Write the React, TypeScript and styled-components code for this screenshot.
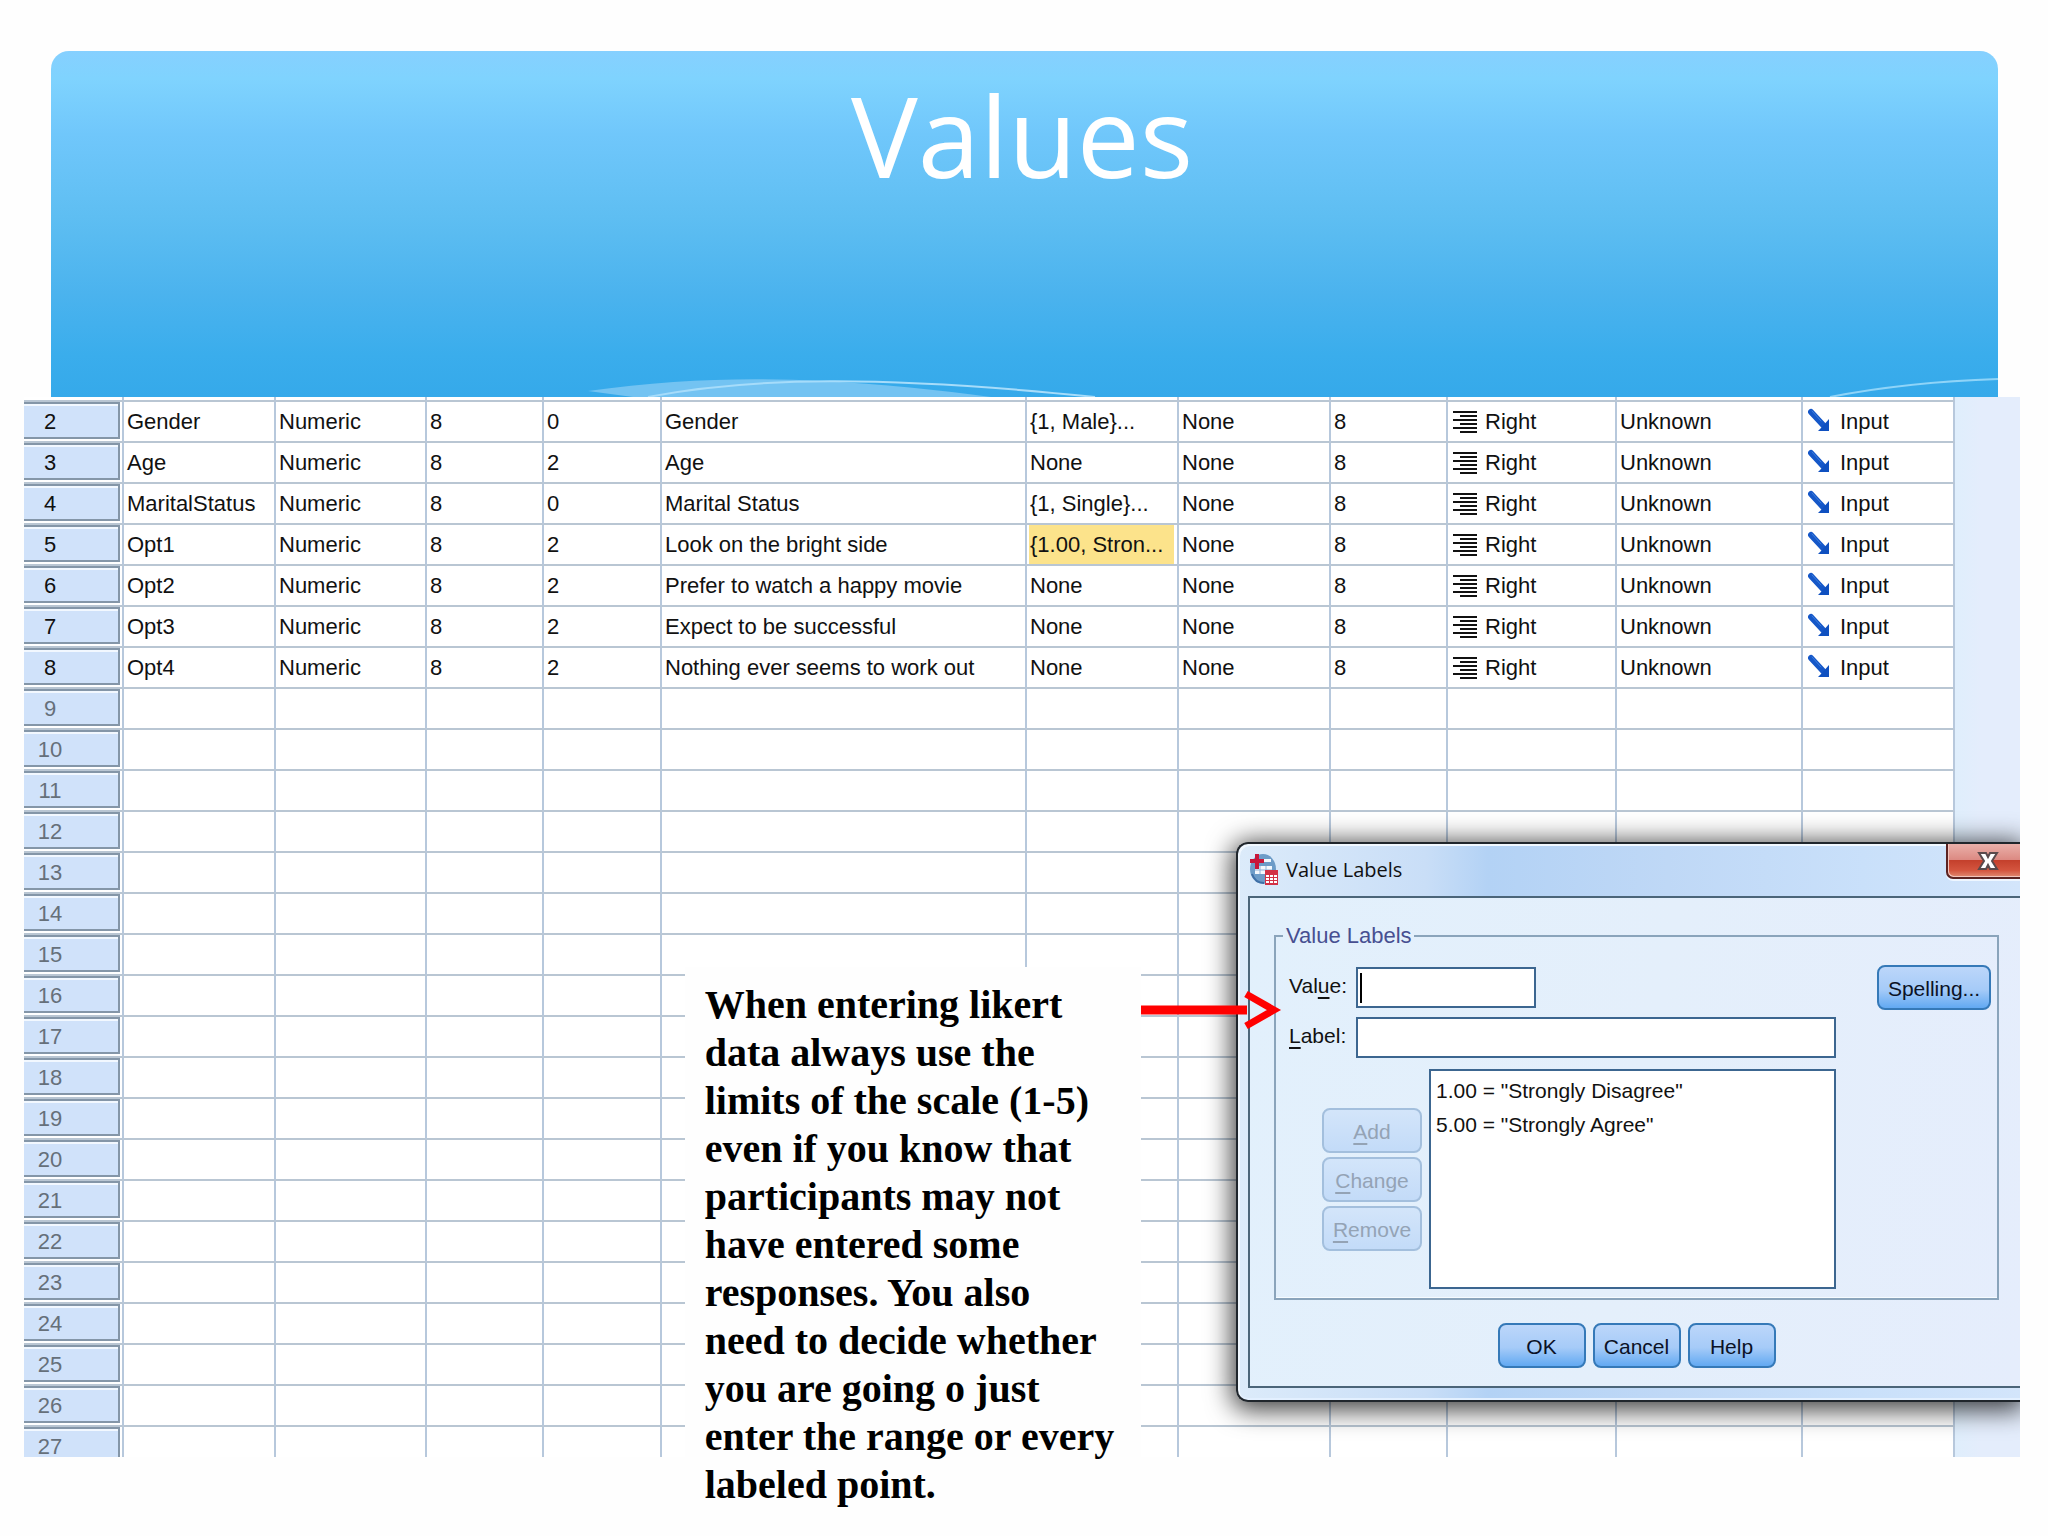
import React from "react";
import styled, { createGlobalStyle, css } from "styled-components";

const sheetFont = '"Liberation Sans", Arial, sans-serif';

const GlobalStyle = createGlobalStyle`
  *, *::before, *::after { box-sizing: border-box; }
  body { margin: 0; background: #fefefe; color: #111; }
`;

const Slide = styled.main`
  min-height: 100vh;
  padding: 51px 28px 0 24px;
`;

const Banner = styled.header`
  position: relative;
  height: 346px;
  margin: 0 22px 0 27px;
  padding: 8px 5px 0 0;
  border-radius: 18px 18px 0 0;
  overflow: hidden;
  background: linear-gradient(#86d0ff 0%, #7fd3fe 8%, #70c7fb 24%, #5ebef2 48%, #4bb3ee 70%, #3aadec 88%, #35a9ea 100%);
`;

const Title = styled.h1`
  margin: 0;
  color: #fff;
  text-align: center;
  font: 400 112px/152px "Open Sans", "Noto Sans", sans-serif;
`;

const Waves = styled.svg`
  position: absolute;
  left: 0;
  bottom: 0;
  width: 100%;
  height: 24px;
`;

const Board = styled.section`
  display: grid;
  align-items: start;
`;

const Sheet = styled.div`
  grid-area: 1 / 1;
  position: relative;
  max-height: 1060px;
  overflow: hidden;
  background: #fff;
`;

const Grid = styled.table`
  width: 100%;
  table-layout: fixed;
  border-collapse: separate;
  border-spacing: 0;
  font: 22px/36px ${sheetFont};
`;

const cellLines = css`
  padding: 0;
  border-right: 2px solid #b7c8dc;
  border-bottom: 2px solid #b9c6d3;
`;

const Row = styled.tr<{ $partial?: boolean }>`
  height: ${(p) => (p.$partial ? 5 : 41)}px;
`;

const Cell = styled.td<{ $selected?: boolean }>`
  ${cellLines}
  padding-left: 3px;
  white-space: nowrap;
  vertical-align: middle;
  ${(p) =>
    p.$selected &&
    css`
      background: #fce38b;
      box-shadow: inset 2px 0 #fff, inset -3px 0 #fff;
    `}
`;

const Filler = styled.td`
  padding: 0;
  background: linear-gradient(90deg, #dfeefc, #e4edfc 40%);
`;

const RowHead = styled.th`
  ${cellLines}
  font-weight: 400;
  text-align: left;
  vertical-align: top;
`;

const RowFace = styled.div<{ $used: boolean }>`
  height: 37px;
  margin-right: 2px;
  border: solid #8496a8;
  border-width: 2px 2px 2px 0;
  box-shadow: inset 0 2px #f2f8ff;
  background: #d0e2fa;
  color: ${(p) => (p.$used ? "#111" : "#66707a")};
`;

const RowNumber = styled.span`
  display: block;
  width: 52px;
  text-align: center;
`;

const IconText = styled.span<{ $gap: number }>`
  display: flex;
  align-items: center;
  gap: ${(p) => p.$gap}px;
  padding-left: 2px;
`;

const Note = styled.aside`
  grid-area: 1 / 1;
  position: relative;
  width: 456px;
  margin: 570px 0 0 33.1%;
  padding: 14px 22px 14px 20px;
  background: #fefefe;
  color: #000;
  font: 700 40px/48px "Liberation Serif", "Times New Roman", serif;

  p { margin: 0; }
`;

const Pointer = styled.svg`
  position: absolute;
  left: 100%;
  top: 20px;
`;

const Dialog = styled.section`
  position: absolute;
  top: 445px;
  right: 0;
  width: 784px;
  padding: 0 0 12px 10px;
  border: 2px solid #20262c;
  border-right: 0;
  border-radius: 12px 0 0 12px;
  background: linear-gradient(90deg, #dcebfa 0, #c9def7 24%, #b3d2f5 32%, #bfd8f6 55%, #c9e0fa 80%, #d3e5fb 100%);
  box-shadow: inset 2px 2px #f1f8ff, inset 0 -2px #e3f0ff, 0 4px 26px 4px rgba(0, 0, 0, 0.75);
  font: 21px/32px ${sheetFont};
`;

const TitleBar = styled.header`
  display: flex;
  align-items: flex-start;
  gap: 8px;
  height: 52px;
  padding-left: 2px;
`;

const AppIcon = styled.svg`
  flex: none;
  margin-top: 10px;
`;

const DialogTitle = styled.h2`
  flex: 1;
  margin: 11px 0 0;
  font: 400 20px/30px "Open Sans", "Noto Sans", sans-serif;
`;

const CloseButton = styled.button`
  display: flex;
  align-items: center;
  justify-content: center;
  width: 74px;
  height: 35px;
  padding: 0 0 0 8px;
  border: 2px solid #5b2322;
  border-width: 0 0 2px 2px;
  border-radius: 0 0 0 7px;
  background: linear-gradient(#eab0aa 0, #dc8a83 47%, #c4402c 50%, #d4553f 80%, #e08a72 100%);
  box-shadow: inset 1px -1px #f3c4bb, 0 2px #eef6ff;
`;

const Client = styled.div`
  display: flex;
  flex-direction: column;
  padding: 22px 21px 18px 24px;
  border: 2px solid #4b6579;
  border-right: 0;
  background: linear-gradient(100deg, #e2f0fc, #e4effb 50%, #e5edfc);
`;

const Group = styled.fieldset`
  display: block;
  min-width: 0;
  margin: 0;
  padding: 13px 6px 9px 13px;
  border: 2px solid #8aa4bb;
  box-shadow: inset 0 -1px #f6fbff;
`;

const Legend = styled.legend`
  margin-left: -6px;
  padding: 0 2px 0 3px;
  color: #474f91;
  font-size: 22px;
  line-height: 32px;
`;

const Form = styled.div`
  display: grid;
  grid-template-columns: 67px 73px 407px 1fr;
  row-gap: 7px;
  align-items: center;
`;

const FieldLabel = styled.label`
  padding-bottom: 4px;

  u { text-underline-offset: 4px; }
`;

const TextBox = styled.input<{ $wide?: boolean; $caret?: boolean }>`
  grid-column: 2 / 4;
  width: ${(p) => (p.$wide ? "100%" : "180px")};
  height: 41px;
  padding: 0 8px;
  border: 2px solid #3c6690;
  border-radius: 0;
  background: #fff;
  font: inherit;
  outline: 0;
  ${(p) =>
    p.$caret &&
    css`
      background: #fff linear-gradient(#000, #000) no-repeat 2px center / 2px 30px;
    `}
`;

const ButtonStack = styled.div`
  grid-column: 1 / 3;
  display: flex;
  flex-direction: column;
  align-items: flex-end;
  align-self: start;
  gap: 4px;
  padding: 43px 7px 0 0;
`;

const ListBox = styled.select`
  width: 100%;
  height: 220px;
  margin-top: 4px;
  padding: 8px 0 0;
  border: 2px solid #3c6690;
  border-radius: 0;
  background: #fff;
  font: inherit;
  overflow: hidden;
  outline: 0;

  option {
    min-height: 34px;
    padding: 0 5px;
    color: #111;
    line-height: 34px;
  }
`;

const Button = styled.button<{ $width: number }>`
  width: ${(p) => p.$width}px;
  height: 45px;
  padding: 2px 0 0;
  border: 2px solid #3579b8;
  border-radius: 8px;
  background: linear-gradient(#bcd6fa, #a6cbf8 55%, #62a9f2);
  color: #0b1226;
  font: inherit;
  white-space: nowrap;

  u { text-underline-offset: 4px; }

  &:disabled {
    border-color: #a3bfdd;
    background: linear-gradient(#d3e5fa, #c3dbf8);
    color: #94a3b5;
  }
`;

const SpellingSlot = styled.div`
  display: flex;
  justify-content: flex-end;
`;

const Actions = styled.footer`
  display: flex;
  justify-content: center;
  gap: 7px;
  padding-top: 23px;
`;

const columnWidths = [100, 152, 151, 117, 118, 365, 152, 152, 117, 169, 186, 152, 65];

const variables = [
  ["Gender", "Numeric", "8", "0", "Gender", "{1, Male}...", "None", "8"],
  ["Age", "Numeric", "8", "2", "Age", "None", "None", "8"],
  ["MaritalStatus", "Numeric", "8", "0", "Marital Status", "{1, Single}...", "None", "8"],
  ["Opt1", "Numeric", "8", "2", "Look on the bright side", "{1.00, Stron...", "None", "8"],
  ["Opt2", "Numeric", "8", "2", "Prefer to watch a happy movie", "None", "None", "8"],
  ["Opt3", "Numeric", "8", "2", "Expect to be successful", "None", "None", "8"],
  ["Opt4", "Numeric", "8", "2", "Nothing ever seems to work out", "None", "None", "8"],
];

const rowNumbers = Array.from({ length: 26 }, (_, i) => i + 2);
const emptyCells = Array.from({ length: 11 }, (_, i) => i);

function AlignRightIcon() {
  return (
    <svg width="24" height="22" viewBox="0 0 24 22" aria-hidden="true">
      <path d="M0 1h24M7 5h17M0 9h24M7 13h17M0 17h24M7 21h17" stroke="#111" strokeWidth="2" />
    </svg>
  );
}

function InputArrowIcon() {
  return (
    <svg width="22" height="28" viewBox="0 0 22 28" aria-hidden="true">
      <path d="M3 4 16 18" stroke="#1557c8" strokeWidth="6" strokeLinecap="round" />
      <path d="M21 11v12H10l4-4z" fill="#0f50c0" />
      <path d="M4 3 13 13" stroke="#3c7ede" strokeWidth="1" strokeLinecap="round" />
    </svg>
  );
}

function VariableGrid() {
  return (
    <Grid>
      <colgroup>
        {columnWidths.map((width, i) => (
          <col key={i} style={{ width }} />
        ))}
      </colgroup>
      <tbody>
        <Row $partial>
          <RowHead />
          {emptyCells.map((i) => (
            <Cell key={i} />
          ))}
          <Filler />
        </Row>
        {rowNumbers.map((n, r) => {
          const variable = variables[r];
          return (
            <Row key={n}>
              <RowHead scope="row">
                <RowFace $used={Boolean(variable)}>
                  <RowNumber>{n}</RowNumber>
                </RowFace>
              </RowHead>
              {variable ? (
                <>
                  {variable.map((text, c) => (
                    <Cell key={c} $selected={n === 5 && c === 5}>
                      {text}
                    </Cell>
                  ))}
                  <Cell>
                    <IconText $gap={8}>
                      <AlignRightIcon />
                      Right
                    </IconText>
                  </Cell>
                  <Cell>Unknown</Cell>
                  <Cell>
                    <IconText $gap={10}>
                      <InputArrowIcon />
                      Input
                    </IconText>
                  </Cell>
                </>
              ) : (
                emptyCells.map((i) => <Cell key={i} />)
              )}
              <Filler />
            </Row>
          );
        })}
      </tbody>
    </Grid>
  );
}

function ValueLabelsDialog() {
  return (
    <Dialog role="dialog" aria-labelledby="dialog-title">
      <TitleBar>
        <AppIcon width="28" height="31" viewBox="0 0 28 31" aria-hidden="true">
          <ellipse cx="13" cy="15" rx="13" ry="15" fill="#6d9cc8" />
          <path d="M2 20c2 6 6 9 12 9" stroke="#3f6fa6" strokeWidth="2" fill="none" />
          <path d="M10 5h11v3H10zM5 12h17v8H5z" fill="#f4f8fd" />
          <path d="M5 16h17M10 12v8M16 12v8" stroke="#8fb2d8" strokeWidth="1" />
          <path d="M7 0v15M0 7h14" stroke="#c8173a" strokeWidth="4" />
          <rect x="15" y="16" width="13" height="15" fill="#d23145" />
          <path d="M16 22h3M20 22h3M24 22h3M16 25h3M20 25h3M24 25h3M16 28h3M20 28h3M24 28h3" stroke="#fff" strokeWidth="2" />
        </AppIcon>
        <DialogTitle id="dialog-title">Value Labels</DialogTitle>
        <CloseButton aria-label="Close">
          <svg width="22" height="20" viewBox="0 0 22 20" aria-hidden="true">
            <path
              d="M2 2h7l2 4 2-4h7l-5 8 5 8h-7l-2-4-2 4H2l5-8z"
              fill="#fff"
              stroke="#5a4a4c"
              strokeWidth="2"
            />
          </svg>
        </CloseButton>
      </TitleBar>
      <Client>
        <Group>
          <Legend>Value Labels</Legend>
          <Form>
            <FieldLabel htmlFor="value">
              Val<u>u</u>e:
            </FieldLabel>
            <TextBox id="value" $caret />
            <SpellingSlot>
              <Button $width={114}>Spelling...</Button>
            </SpellingSlot>
            <FieldLabel htmlFor="label">
              <u>L</u>abel:
            </FieldLabel>
            <TextBox id="label" $wide />
            <span />
            <ButtonStack>
              <Button $width={100} disabled>
                <u>A</u>dd
              </Button>
              <Button $width={100} disabled>
                <u>C</u>hange
              </Button>
              <Button $width={100} disabled>
                <u>R</u>emove
              </Button>
            </ButtonStack>
            <ListBox size={6} aria-label="Defined value labels">
              <option>1.00 = "Strongly Disagree"</option>
              <option>5.00 = "Strongly Agree"</option>
            </ListBox>
          </Form>
        </Group>
        <Actions>
          <Button $width={88}>OK</Button>
          <Button $width={88}>Cancel</Button>
          <Button $width={88}>Help</Button>
        </Actions>
      </Client>
    </Dialog>
  );
}

export default function App() {
  return (
    <>
      <GlobalStyle />
      <Slide>
        <Banner>
          <Title>Values</Title>
          <Waves viewBox="0 0 1947 24" preserveAspectRatio="none" aria-hidden="true">
            <path d="M537 18C620 6 700 4 770 8 830 11 890 17 940 24H582Z" fill="#73c3f2" />
            <path d="M597 24C700 4 830 2 1044 24" fill="none" stroke="#a6dcfa" strokeWidth="2" />
            <path d="M1779 24C1830 14 1890 8 1947 6" fill="none" stroke="#8fd4f8" strokeWidth="2" />
          </Waves>
        </Banner>
        <Board>
          <Sheet>
            <VariableGrid />
            <ValueLabelsDialog />
          </Sheet>
          <Note>
            <p>
              When entering likert data always use the limits of the scale (1-5) even if you know that
              participants may not have entered some responses. You also need to decide whether you are
              going o just enter the range or every labeled point.
            </p>
            <Pointer width="146" height="46" viewBox="0 0 146 46" aria-hidden="true">
              <path d="M0 23h106" stroke="#f00" strokeWidth="9" />
              <path d="M105 7 133 23 105 39" fill="none" stroke="#f00" strokeWidth="7" />
            </Pointer>
          </Note>
        </Board>
      </Slide>
    </>
  );
}
